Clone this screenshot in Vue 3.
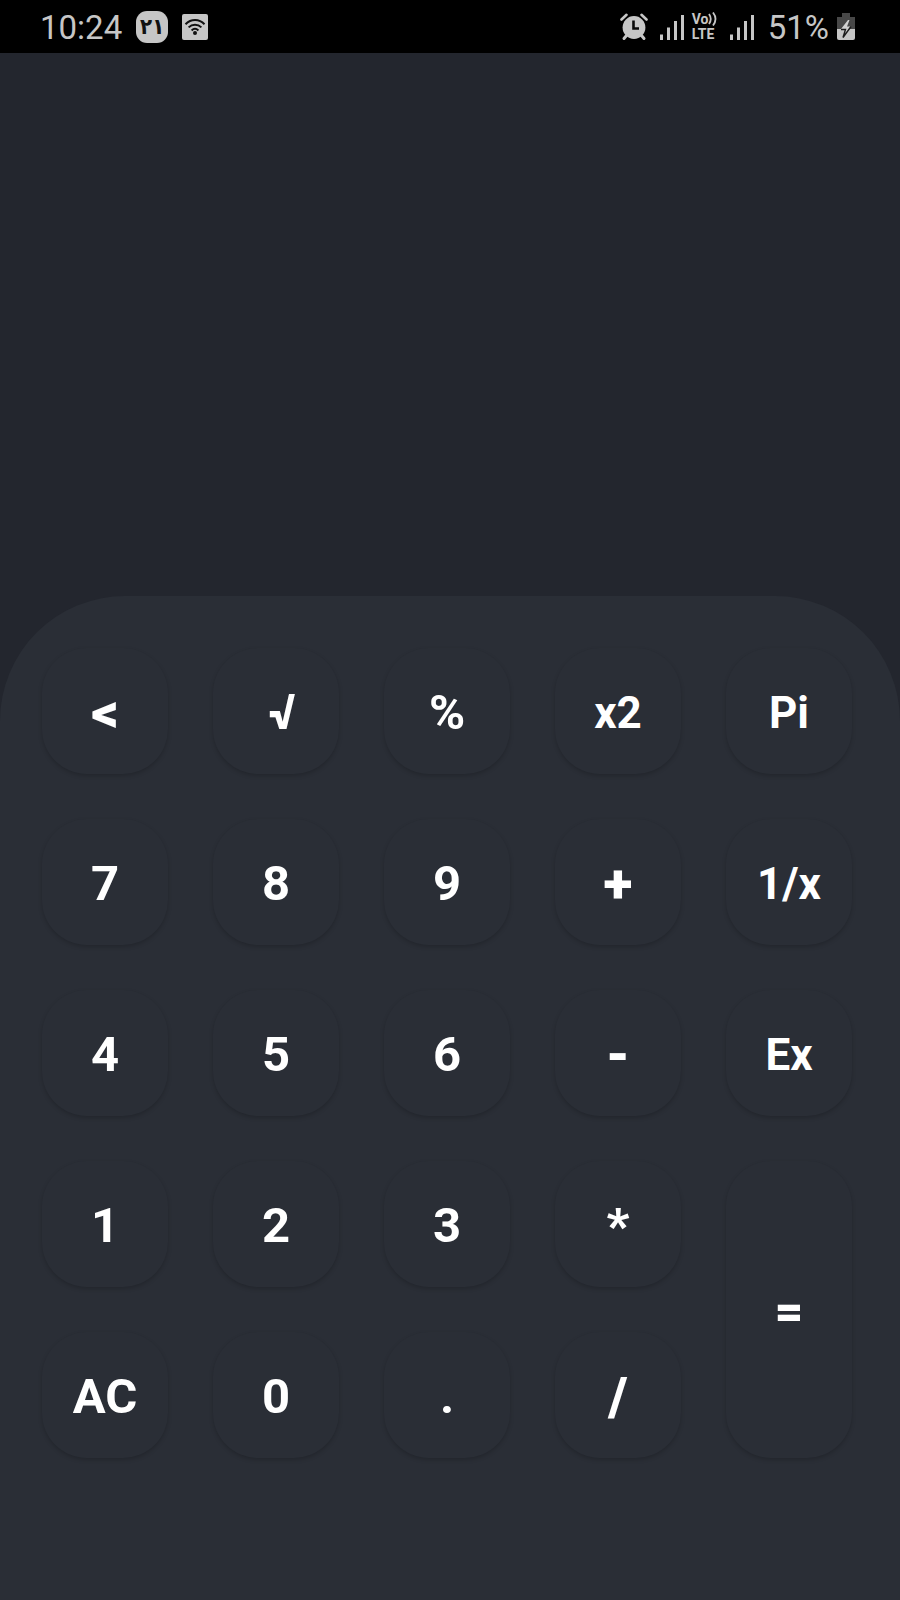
<script setup>
const keys = [
  { label: '<', name: 'Backspace', operator: true },
  { label: ' √', name: 'Square root', heavy: true },
  { label: '%' },
  { label: 'x2', word: true },
  { label: 'Pi', word: true },
  { label: '7' },
  { label: '8' },
  { label: '9' },
  { label: '+', operator: true },
  { label: '1/x', word: true },
  { label: '4' },
  { label: '5' },
  { label: '6' },
  { label: '-', operator: true },
  { label: 'Ex', word: true },
  { label: '1' },
  { label: '2' },
  { label: '3' },
  { label: '*', heavy: true },
  { label: '=', tall: true, heavy: true },
  { label: 'AC' },
  { label: '0' },
  { label: '.' },
  { label: '/', operator: true }
]
</script>

<template>
  <div class="phone">
    <header class="status">
      <div class="group">
        <span class="clock">10:24</span>
        <span class="date">۲۱</span>
        <svg width="26" height="26" viewBox="0 0 26 26">
          <rect width="26" height="26" rx="2" fill="#c6c6c6" />
          <g fill="none" stroke="#111" stroke-width="2">
            <path d="M3.500 10.200C9 4.600 17.200 4.600 22.500 10.200" />
            <path d="M6.600 13.400C10.200 9.700 15.800 9.700 19.400 13.400" />
            <path d="M9.600 16.400C11.600 14.500 14.400 14.500 16.400 16.400" />
          </g>
          <circle cx="13" cy="19" r="2" fill="#111" />
        </svg>
      </div>
      <div class="group right">
        <svg class="alarm" width="28" height="28" viewBox="0 0 28 28">
          <g stroke="#c6c6c6" stroke-linecap="round" fill="none">
            <path d="M1.500 6.500L6.500 1.800M26.500 6.500L21.500 1.800" stroke-width="2.600" />
            <path d="M6.500 22.500L4 25.500M21.500 22.500L24 25.500" stroke-width="3" />
          </g>
          <circle cx="14" cy="14.500" r="11.400" fill="#c6c6c6" />
          <path d="M13.500 7.500V15.500H19" fill="none" stroke="#080808" stroke-width="2.600" />
        </svg>
        <svg width="24" height="26" viewBox="0 0 24 26">
          <path d="M1.500 20.500V26M8.500 13.500V26M15.500 7V26M22.500 1V26" stroke="#c6c6c6" stroke-width="3" />
        </svg>
        <div class="volte">
          <span class="vo">Vo<svg width="10" height="14" viewBox="0 0 10 14">
            <path d="M1 2Q4.500 7 1 12M5 .5Q10 7 5 13.500" fill="none" stroke="#c6c6c6" stroke-width="1.800" />
          </svg></span>
          <span>LTE</span>
        </div>
        <svg width="24" height="26" viewBox="0 0 24 26">
          <path d="M1.500 20.500V26M8.500 13.500V26M15.500 7V26M22.500 1V26" stroke="#c6c6c6" stroke-width="3" />
        </svg>
        <span class="percent">51%</span>
        <svg width="18" height="28" viewBox="0 0 18 28">
          <path d="M5 0H13V4H18V16H0V4H5Z" fill="#484848" />
          <path d="M0 16H18V25Q18 27 16 27H2Q0 27 0 25Z" fill="#c6c6c6" />
          <path d="M11 7L4 16H8.500L6 24.500L14 13.500H10L12.500 7Z" fill="#d2d2d2" />
          <path d="M4 16.500H8.500L6 24.500L14 13.500" fill="none" stroke="#1c1c1c" stroke-width="1.400" />
        </svg>
      </div>
    </header>

    <output class="display" aria-label="Result"></output>

    <main class="pad">
      <button
        v-for="key in keys"
        :key="key.label"
        type="button"
        class="key"
        :class="{ word: key.word, tall: key.tall, heavy: key.heavy, operator: key.operator }"
        :aria-label="key.name"
      >{{ key.label }}</button>
    </main>
  </div>
</template>

<style>
body {
  background: #23262e;
}
</style>

<style scoped>
.phone {
  display: flex;
  flex-direction: column;
  min-height: 100vh;
  background: #23262e;
  font-family: Roboto, "Noto Sans", sans-serif;
}

.status {
  display: flex;
  align-items: center;
  justify-content: space-between;
  box-sizing: border-box;
  height: 53px;
  padding: 0 45px 0 40px;
  background: #000;
  color: #c6c6c6;
}

.group {
  display: flex;
  align-items: center;
  gap: 14px;
}

.right {
  gap: 8px;
}

.alarm {
  margin-right: 4px;
}

.clock,
.percent {
  padding-top: 2px;
  font-size: 33px;
  line-height: 40px;
}

.percent {
  margin-left: 6px;
}

.date {
  display: grid;
  place-items: center;
  width: 32px;
  height: 32px;
  border-radius: 11px;
  background: #c6c6c6;
  color: #111;
  font: 700 22px/32px "DejaVu Sans Condensed", "DejaVu Sans", sans-serif;
}

.volte {
  display: flex;
  flex-direction: column;
  width: 30px;
  font-size: 14px;
  font-weight: 700;
  line-height: 15px;
}

.vo {
  display: flex;
}

.vo svg {
  flex: none;
}

.display {
  flex: 1;
  min-height: 120px;
}

.pad {
  display: grid;
  grid-template-columns: repeat(5, 1fr);
  grid-auto-rows: 126px;
  gap: 45px;
  padding: 52px 48px 142px 42px;
  border-radius: 125px 125px 0 0;
  background: #2a2e36;
}

.key {
  padding: 4px 0 0;
  border: 0;
  border-radius: 45px;
  background: #2a2e36;
  box-shadow: 0 2px 4px rgba(0, 0, 0, 0.18);
  color: #fff;
  font-family: inherit;
  font-size: 49px;
  font-weight: 700;
  line-height: 60px;
  white-space: pre;
  cursor: pointer;
}

.word {
  font-size: 44px;
}

.heavy,
.operator {
  font-weight: 900;
}

.operator {
  font-size: 54px;
}

.tall {
  grid-row: span 2;
}
</style>
